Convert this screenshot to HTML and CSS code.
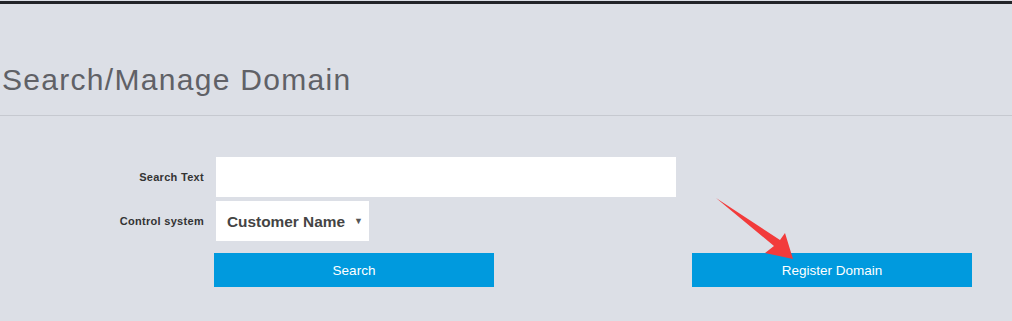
FILE: index.html
```html
<!DOCTYPE html>
<html lang="en">
<head>
  <meta charset="UTF-8">
  <meta name="viewport" content="width=device-width, initial-scale=1.0">
  <title>Search/Manage Domain</title>
  <link rel="stylesheet" href="styles.css">
</head>
<body>
  <div class="top-bar"></div>

  <div class="page">
    <h1 class="page-title">Search/Manage Domain</h1>
    <hr class="divider">

    <form class="search-form" onsubmit="return false;">
      <label class="form-label" for="searchText">Search Text</label>
      <input id="searchText" class="text-input" type="text">

      <label class="form-label" for="controlSystem">Control system</label>
      <div class="select-wrap">
        <select id="controlSystem" class="select-input">
          <option>Customer Name</option>
          <option>Domain Name</option>
        </select>
        <span class="select-arrow">&#9660;</span>
      </div>
    </form>

    <div class="button-row">
      <button class="action-button" type="button">Search</button>
      <button class="action-button" type="button">Register Domain</button>
    </div>
  </div>

  <!-- annotation arrow drawn over the page -->
  <svg class="annotation" xmlns="http://www.w3.org/2000/svg" viewBox="0 0 100 80" width="100" height="80">
    <polygon points="2,3 66,45 71,38 79,64 51,58 60,51" fill="#f23b3b"></polygon>
  </svg>
</body>
</html>
```

FILE: styles.css
```css
* {
  margin: 0;
  padding: 0;
  box-sizing: border-box;
}

body {
  background-color: #dcdfe6;
  font-family: 'Liberation Sans', Arial, sans-serif;
  width: 1012px;
  height: 321px;
  overflow: hidden;
  position: relative;
}

.top-bar {
  margin-top: 1px;
  height: 3px;
  background-color: #222428;
}

.page-title {
  font-weight: normal;
  font-size: 30px;
  letter-spacing: 1.3px;
  color: #606166;
  padding: 60px 0 0 2px;
  line-height: 32px;
}

.divider {
  border: none;
  border-top: 1px solid #c6c9d0;
  margin-top: 19px;
}

.search-form {
  display: grid;
  grid-template-columns: 204px auto;
  column-gap: 12px;
  row-gap: 4px;
  justify-items: start;
  align-items: center;
  margin-top: 41px;
}

.form-label {
  justify-self: end;
  font-size: 11px;
  font-weight: bold;
  letter-spacing: 0.3px;
  color: #333;
}

.text-input {
  width: 460px;
  height: 40px;
  border: none;
  background-color: #fff;
  outline: none;
  padding: 0 10px;
  font-size: 15px;
}

.select-wrap {
  display: flex;
  align-items: center;
  width: 153px;
  height: 40px;
  background-color: #fff;
  padding: 0 6px 0 11px;
}

.select-input {
  appearance: none;
  -webkit-appearance: none;
  border: none;
  background: transparent;
  outline: none;
  font-family: 'Liberation Sans', Arial, sans-serif;
  font-size: 15.4px;
  font-weight: bold;
  color: #444;
  flex: 1;
}

.select-arrow {
  font-size: 9px;
  color: #555;
}

.button-row {
  display: flex;
  gap: 198px;
  padding-left: 214px;
  margin-top: 12px;
}

.action-button {
  width: 280px;
  height: 34px;
  border: none;
  background-color: #009ade;
  color: #fff;
  font-family: 'Liberation Sans', Arial, sans-serif;
  font-size: 13.5px;
  cursor: pointer;
}

.annotation {
  position: absolute;
  left: 714px;
  top: 195px;
}
```
